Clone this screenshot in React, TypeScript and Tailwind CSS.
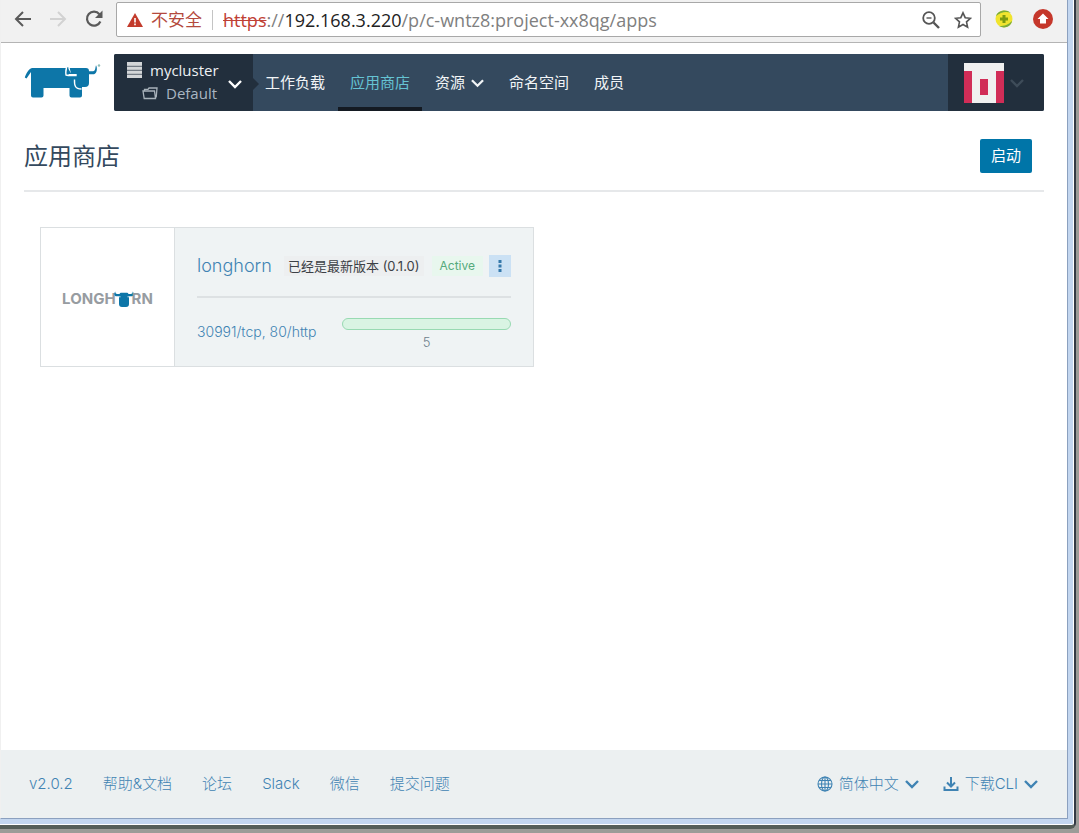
import React from 'react';

const UI_FONT = 'font-["Open_Sans","Noto_Sans_CJK_SC",sans-serif]';
const BRAND_FONT = 'font-[Inter,"Noto_Sans_CJK_SC",sans-serif]';

interface IconProps {
  className?: string;
}

const Chevron: React.FC<IconProps> = ({ className }) => (
  <svg className={className} viewBox="0 0 14 10" fill="none" stroke="currentColor" strokeWidth="2.4">
    <path d="M1 2l6 6 6-6" />
  </svg>
);

const BackIcon: React.FC<IconProps> = ({ className }) => (
  <svg className={className} viewBox="0 0 18 16" fill="none" stroke="currentColor" strokeWidth="2">
    <path d="M17 8H2M9 1L2 8l7 7" />
  </svg>
);

const ReloadIcon = () => (
  <svg className="h-5 w-5" viewBox="0 0 20 20" fill="none" stroke="#5a5a5a" strokeWidth="2.2">
    <path d="M16.4 12.5A7 7 0 1 1 15.4 5.2" />
    <path d="M18.5 1.5v7.500h-7.500z" fill="#5a5a5a" stroke="none" />
  </svg>
);

const RancherLogo = () => (
  <svg className="h-[37px] w-[77px]" viewBox="0 0 77 37" fill="#0d76a8">
    {/* Body, legs and tail */}
    <path d="M8 5h54a3 3 0 0 1 3 3v12a4 4 0 0 1-4 4h-3v8.500a2 2 0 0 1-2 2h-8.500a2 2 0 0 1-2-2V25H19.500v7.500a2 2 0 0 1-2 2h-8.500a2 2 0 0 1-2-2V9L2.500 15.500.800 14.500C2.500 10 4.500 6 8 5z" />
    {/* Left horn */}
    <path d="M44.500 1.200C42 4 41.500 8 42 12c3 1 7 .500 10 .500V9h-5c-1.500-2-2.500-4.500-2.500-7.800z" stroke="#fff" strokeWidth="1.400" />
    <path d="M45.800 5H54v6h-7z" />
    <path d="M44.500 9.700H52M50.500 14.500c-.200 6 .500 9.500 7 9.500" fill="none" stroke="#fff" strokeWidth="1.400" transform="translate(0 2)" />
    {/* Right horn */}
    <path d="M72 2.200c1.800 3 .800 8.500-2 9-1.500.300-3.500.100-5 0V8.300c2.500 0 4.500.200 5.500-.900 1-1.200.800-3 1.500-5.200z" />
    <circle cx="75" cy="2.500" r="1.200" fill="#8fbdb8" />
  </svg>
);

const ServerIcon = () => (
  <svg className="h-4 w-4" viewBox="0 0 16 16" fill="#d3d6d8">
    <path d="M1 0h15v4H1zM1 4.500h15v3.500H1zM1 8.500h15v3.500H1zM1 12.500h15v3.500H1z" />
    <path d="M1 4.200h15M1 8.200h15M1 12.200h15" stroke="#6d7780" strokeWidth=".8" />
  </svg>
);

const FolderIcon = () => (
  <svg className="h-3.5 w-4" viewBox="0 0 16 14" fill="none" stroke="#a9b3bb" strokeWidth="1.300">
    <path d="M1 5h11.500l1 7.500H2.200zM2.500 5V3.300h3.500l1-1.300h8l-.800 9.500" />
  </svg>
);

const Avatar = () => (
  <svg className="h-10 w-10" viewBox="0 0 40 40" shapeRendering="crispEdges">
    <path d="M0 0h40v40H0z" fill="#f0f0f0" />
    <path d="M0 8h8v32H0zM32 8h8v32h-8zM16 16h8v16h-8z" fill="#d12d57" />
  </svg>
);

const LonghornLogo = () => (
  <div className="flex items-center pt-1 text-[15px] font-bold text-[#979ca1]" aria-label="Longhorn">
    <span>LONGH</span>
    <svg className="-mx-0.5 h-4 w-5 shrink-0" viewBox="0 0 20 16" fill="#0d76a8">
      <path d="M1.200.500C-.300 2.500.300 5 2 5.300h3v7.700C5 15 6 16 8 16h4c2 0 3-1 3-3V5.300h3c1.700-.300 2.300-2.800.800-4.800-.300 1.800-.800 2.500-2 2.500h-2.300c-.300-.900-1-1.300-2-1.300h-5c-1 0-1.700.400-2 1.300H3.200C2 3 1.500 2.300 1.200.500z" />
      <path d="M5 5.800h1.500M13.500 5.800H15" stroke="#fff" strokeWidth=".8" />
    </svg>
    <span>RN</span>
  </div>
);

const BrowserBar = () => (
  <div className="flex h-[43px] items-start border-b border-[#b4b4b4] bg-[#f1f1f1] pl-[13px]">
    <div className="flex h-[38px] items-center gap-[17px]">
      <button aria-label="Back" className="text-[#5a5a5a]"><BackIcon className="h-4 w-[18px]" /></button>
      <button aria-label="Forward" className="text-[#d2d2d2]"><BackIcon className="h-4 w-[18px] rotate-180" /></button>
      <button aria-label="Reload"><ReloadIcon /></button>
    </div>
    <div className="ml-3 mt-0.5 flex h-[35px] flex-1 items-center rounded-xs border border-[#a8a8a8] bg-white pl-2.5 pr-2">
      <svg className="h-[14px] w-4" viewBox="0 0 16 14">
        <path d="M8 0l8 14H0z" fill="#c33b2c" />
        <path d="M8 5v4.500M8 10.500v1.800" stroke="#fff" strokeWidth="1.600" />
      </svg>
      <span className="ml-2 text-[17px] text-[#b4493d]">不安全</span>
      <span className="mx-2.5 h-5 w-px bg-[#c4c4c4]" />
      <span className="whitespace-nowrap text-lg text-[#808080]">
        <span className="text-[#bf4034] line-through">https</span>://
        <span className="text-[#222]">192.168.3.220</span>/p/c-wntz8:project-xx8qg/apps
      </span>
      <div className="ml-auto flex items-center gap-3.5">
        <button aria-label="Zoom">
          <svg className="h-[18px] w-[18px]" viewBox="0 0 18 18" fill="none" stroke="#555" strokeWidth="1.800">
            <circle cx="7" cy="7" r="5.800" />
            <path d="M4.500 7h5" strokeWidth="1.400" />
            <path d="M11.500 11.500L17 17" strokeWidth="2.400" />
          </svg>
        </button>
        <button aria-label="Bookmark">
          <svg className="h-[18px] w-[18px]" viewBox="0 0 18 18" fill="none" stroke="#555" strokeWidth="1.600">
            <path d="M9 1.800l2.200 4.900 5.200.600-3.900 3.600 1.100 5.300L9 13.500l-4.600 2.700 1.100-5.300L1.600 7.300l5.200-.600z" />
          </svg>
        </button>
      </div>
    </div>
    <div className="ml-[13px] mr-3.5 flex h-[38px] items-center gap-[19px]">
      <button aria-label="Extension">
        <svg className="h-5 w-5" viewBox="0 0 20 20">
          <circle cx="10" cy="10" r="8.500" fill="#f0e42e" />
          <path d="M2 7C3 2 12-1 17 4 12 2 7 3 2 7zM18 12c-1 6-8 8-13 5 6 0 9-1 13-5z" fill="#79ab3c" />
          <path d="M10 6v8M6 10h8" stroke="#7b9a10" strokeWidth="3" />
        </svg>
      </button>
      <button aria-label="Update">
        <svg className="h-5 w-5" viewBox="0 0 20 20">
          <circle cx="10" cy="10" r="10" fill="#c5372b" />
          <path d="M10 4.500l5.500 5.500H13v4.500H7V10H4.500z" fill="#fff" />
        </svg>
      </button>
    </div>
  </div>
);

const NAV_ITEMS = [
  { label: '工作负载' },
  { label: '应用商店', active: true },
  { label: '资源', menu: true },
  { label: '命名空间' },
  { label: '成员' },
];

const Header = () => (
  <header className="flex pl-[23px] pr-[23px] pt-[11px]">
    <a href="#home" aria-label="Rancher" className="mr-[13px] pt-[9px]"><RancherLogo /></a>
    <div className="flex h-[57px] flex-1 rounded-xs bg-[#34495e]">
      <button className="relative flex w-[139px] items-center rounded-l-xs bg-[#222f3d] pb-0.5 pl-3 text-left text-[15px] leading-[23px]">
        <span className="flex-1">
          <span className="flex items-center gap-2 text-[#eef1f4]"><ServerIcon />mycluster</span>
          <span className="ml-4 flex items-center gap-2 text-[#a9b6c2]"><FolderIcon />Default</span>
        </span>
        <Chevron className="mr-[11px] mt-1 h-2.5 w-3.5 text-white" />
        <svg className="absolute -right-1.5 top-6 h-3 w-1.5" viewBox="0 0 6 12" fill="#222f3d">
          <path d="M0 0l6 6-6 6z" />
        </svg>
      </button>
      <nav className="flex gap-px text-[15px]">
        {NAV_ITEMS.map(item => (
          <a
            key={item.label}
            href={`#${item.label}`}
            className={`flex items-center gap-1.5 whitespace-nowrap border-y-4 border-t-transparent px-3 ${
              item.active ? 'border-b-[#141a22] text-[#65c3d3]' : 'border-b-transparent text-[#f2f5f7]'
            }`}
          >
            {item.label}
            {item.menu && <Chevron className="h-2.5 w-[13px]" />}
          </a>
        ))}
      </nav>
      <button aria-label="Account" className="ml-auto flex w-24 items-center gap-1.5 rounded-r-xs bg-[#222f3d] pl-4">
        <Avatar />
        <Chevron className="h-2.5 w-3.5 text-[#3e4c59]" />
      </button>
    </div>
  </header>
);

const AppCard = () => (
  <article className={`flex h-[140px] border border-[#dbdfe1] bg-[#eff3f4] ${BRAND_FONT}`}>
    <div className="flex w-[134px] shrink-0 items-center justify-center border-r border-[#dbdfe1] bg-white">
      <LonghornLogo />
    </div>
    <div className="flex-1 px-[22px] pt-[27px]">
      <div className="flex h-[22px] items-center text-xs">
        <a href="#longhorn" className="text-lg font-light text-[#3f83b3]">longhorn</a>
        <span className="ml-auto whitespace-nowrap bg-[#edeff0] px-1 text-[13px] leading-5 text-[#3c4146]">已经是最新版本 (0.1.0)</span>
        <span className="ml-2 bg-[#e8f7ee] px-2 leading-5 text-[#55aa7c]">Active</span>
        <button aria-label="Actions" className="ml-1.5 flex h-[22px] w-[22px] items-center justify-center bg-[#cbe1f4]">
          <svg className="h-3 w-1" viewBox="0 0 4 12" fill="#3478aa">
            <path d="M.500 0h3v3h-3zM.500 4.500h3v3h-3zM.500 9h3v3h-3z" />
          </svg>
        </button>
      </div>
      <div className="mt-[19px] h-0.5 bg-[#dde1e3]" />
      <div className="mt-5 flex items-start justify-between">
        <p className="pt-1 text-sm font-light leading-5 text-[#3f83b3]">
          <a href="#tcp">30991/tcp</a>, <a href="#http">80/http</a>
        </p>
        <div className="w-[169px] text-center">
          <div className="h-3 rounded-full border border-[#98dab2] bg-[#d9f4e3]" />
          <p className="text-[13px] font-light leading-6 text-[#6d7d8b]">5</p>
        </div>
      </div>
    </div>
  </article>
);

const FOOTER_LINKS = ['v2.0.2', '帮助&文档', '论坛', 'Slack', '微信', '提交问题'];

const Footer = () => (
  <footer className={`flex h-[68px] items-center justify-between bg-[#ecf0f1] pl-7 pr-[29px] text-[15px] font-light text-[#3f83b3] ${BRAND_FONT}`}>
    <div className="flex gap-[30px]">
      {FOOTER_LINKS.map(label => (
        <a key={label} href={`#${label}`}>{label}</a>
      ))}
    </div>
    <div className="flex gap-6">
      <button className="flex items-center gap-1.5">
        <svg className="h-4 w-4" viewBox="0 0 16 16" fill="none" stroke="currentColor" strokeWidth="1.100">
          <circle cx="8" cy="8" r="7" />
          <ellipse cx="8" cy="8" rx="3.500" ry="7" />
          <path d="M8 1v14M1 8h14M2 4.500h12M2 11.500h12" />
        </svg>
        简体中文
        <Chevron className="h-2.5 w-3.5" />
      </button>
      <button className="flex items-center gap-1.5">
        <svg className="h-4 w-4" viewBox="0 0 16 16" fill="none" stroke="currentColor" strokeWidth="2">
          <path d="M8 1v9M4 6.500l4 4 4-4M1.500 10.500V14h13v-3.500" />
        </svg>
        下载CLI
        <Chevron className="h-2.5 w-3.5" />
      </button>
    </div>
  </footer>
);

export default function App() {
  return (
    <div className={`flex min-h-screen flex-col bg-[#9c9c98] pb-1 pr-[3px] ${UI_FONT}`}>
      {/* Window frame */}
      <div className="flex flex-1 flex-col rounded-br-md border-b-4 border-r-2 border-b-[#555e58] border-r-[#343a44] bg-white pb-px pr-px">
        <div className="flex flex-1 flex-col bg-[#c3d6ef] pb-[5px] pr-[5px]">
          <div className="flex flex-1 flex-col border-b border-l border-r border-b-[#8ba0bf] border-l-[#f0f0f0] border-r-[#8ba0bf] bg-white">
            <BrowserBar />
            <Header />
            <main className="flex-1 pl-[23px] pr-[23px]">
              <div className="flex h-[81px] items-center justify-between border-b-2 border-[#e6e8ea] pr-3 pt-2.5">
                <h1 className="text-2xl text-[#34495e]">应用商店</h1>
                <button className="h-[34px] rounded-xs bg-[#0075a8] px-[11px] text-[15px] text-white">启动</button>
              </div>
              <div className="grid grid-cols-2 px-4 pt-[35px]">
                <AppCard />
              </div>
            </main>
            <Footer />
          </div>
        </div>
      </div>
    </div>
  );
}
